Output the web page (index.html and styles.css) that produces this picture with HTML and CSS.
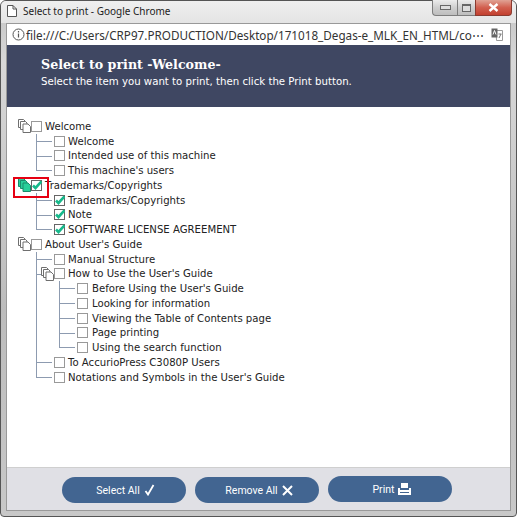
FILE: index.html
```html
<!DOCTYPE html>
<html>
<head>
<meta charset="utf-8">
<title>Select to print</title>
<link rel="stylesheet" href="styles.css">
</head>
<body>

<svg class="defs" width="0" height="0">
    <symbol id="pages" viewBox="0 0 13 14">
        <path d="M.5.5h5l1.500 1.500v6.500h-6.500z"/>
        <path d="M2.500 2.500h5l1.500 1.500v6.500h-6.500z"/>
        <path d="M5 5h5l2.500 2.500v6h-7.500z"/>
    </symbol>
    <symbol id="tick" viewBox="0 0 11 11">
        <path d="M2 5.500l2.500 2.500 6-6.500" fill="none" stroke="#17b98b" stroke-width="2.600"/>
    </symbol>
</svg>

<div class="window">
    <div class="titlebar">
        <svg class="page-icon" width="10" height="12" viewBox="0 0 10 12"><path d="M.5.5h5.500l3.500 3.500v7.500h-9z" fill="#fff" stroke="#555"/><path d="M6 .5v3.500h3.500" fill="none" stroke="#555"/></svg>
        <span class="title-text">Select to print - Google Chrome</span>
        <div class="controls">
            <span class="ctl ctl-min"><i></i></span>
            <span class="ctl ctl-max"><i></i></span>
            <span class="ctl ctl-close">
                <svg width="11" height="9" viewBox="0 0 11 9"><path d="M1.500 1l8 7M9.500 1l-8 7" stroke="#fff" stroke-width="2.400"/></svg>
            </span>
        </div>
    </div>

    <div class="client">
        <div class="address">
            <svg width="13" height="13" viewBox="0 0 13 13"><circle cx="6.500" cy="6.500" r="5.500" fill="none" stroke="#555"/><path d="M6.500 5.500v4M6.500 3v1.500" stroke="#555" stroke-width="1.200"/></svg>
            <span class="url">file:///C:/Users/CRP97.PRODUCTION/Desktop/171018_Degas-e_MLK_EN_HTML/co⋯</span>
            <svg class="translate" width="12" height="13" viewBox="0 0 12 13"><path d="M5 2.500h6.500v10h-6z" fill="#fff" stroke="#999"/><path d="M.5.500h6v9h-6z" fill="#666"/><path d="M2 6.500l1.500-4 1.500 4" fill="none" stroke="#fff"/><path d="M7.500 6h3M8 10l2-4" stroke="#777"/></svg>
        </div>

        <div class="header">
            <h1>Select to print -Welcome-</h1>
            <p>Select the item you want to print, then click the Print button.</p>
        </div>

        <div class="content">
            <ul class="tree">
                <li>
                    <div class="row"><svg class="pages"><use href="#pages"/></svg><span class="box"></span><span class="name">Welcome</span></div>
                    <ul>
                        <li><div class="row"><span class="box"></span><span class="name">Welcome</span></div></li>
                        <li><div class="row"><span class="box"></span><span class="name">Intended use of this machine</span></div></li>
                        <li><div class="row"><span class="box"></span><span class="name">This machine's users</span></div></li>
                    </ul>
                </li>
                <li class="selected">
                    <div class="row"><svg class="pages"><use href="#pages"/></svg><span class="box"><svg><use href="#tick"/></svg></span><span class="name">Trademarks/Copyrights</span></div>
                    <span class="callout"></span>
                    <ul>
                        <li><div class="row"><span class="box"><svg><use href="#tick"/></svg></span><span class="name">Trademarks/Copyrights</span></div></li>
                        <li><div class="row"><span class="box"><svg><use href="#tick"/></svg></span><span class="name">Note</span></div></li>
                        <li><div class="row"><span class="box"><svg><use href="#tick"/></svg></span><span class="name">SOFTWARE LICENSE AGREEMENT</span></div></li>
                    </ul>
                </li>
                <li>
                    <div class="row"><svg class="pages"><use href="#pages"/></svg><span class="box"></span><span class="name">About User's Guide</span></div>
                    <ul>
                        <li><div class="row"><span class="box"></span><span class="name">Manual Structure</span></div></li>
                        <li class="group">
                            <div class="row"><svg class="pages"><use href="#pages"/></svg><span class="box"></span><span class="name">How to Use the User's Guide</span></div>
                            <ul>
                                <li><div class="row"><span class="box"></span><span class="name">Before Using the User's Guide</span></div></li>
                                <li><div class="row"><span class="box"></span><span class="name">Looking for information</span></div></li>
                                <li><div class="row"><span class="box"></span><span class="name">Viewing the Table of Contents page</span></div></li>
                                <li><div class="row"><span class="box"></span><span class="name">Page printing</span></div></li>
                                <li><div class="row"><span class="box"></span><span class="name">Using the search function</span></div></li>
                            </ul>
                        </li>
                        <li><div class="row"><span class="box"></span><span class="name">To AccurioPress C3080P Users</span></div></li>
                        <li><div class="row"><span class="box"></span><span class="name">Notations and Symbols in the User's Guide</span></div></li>
                    </ul>
                </li>
            </ul>
        </div>

        <div class="footer">
            <a class="btn">Select All
                <svg width="12" height="12" viewBox="0 0 12 12"><path d="M1.500 7l2.500 3.500L9.500 1" fill="none" stroke="#fff" stroke-width="1.800"/></svg>
            </a>
            <a class="btn">Remove All
                <svg width="11" height="11" viewBox="0 0 11 11"><path d="M1 1l9 9M10 1l-9 9" stroke="#fff" stroke-width="2"/></svg>
            </a>
            <a class="btn btn-print">Print
                <svg width="13" height="12" viewBox="0 0 13 12"><path d="M3 0h7v5H3z" fill="#fff"/><path d="M0 5h2v2h9V5h2v7H0z" fill="#fff"/><path d="M2 9.500h9" stroke="#426591"/></svg>
            </a>
        </div>
    </div>
</div>

</body>
</html>
```
FILE: styles.css
```css
html, body {margin:0; padding:0; background:#fff;}
ul {list-style:none; margin:0; padding:0;}
.defs {display:block;}

/* browser window */
.window {box-sizing:border-box; width:517px; height:517px; padding:0 5px 5px; display:flex; flex-direction:column; background:linear-gradient(#c4c4c4, #d8d8d8 12%, #bcbcbc 60%, #c8c8c8); border:1px solid #555; border-radius:6px 6px 4px 4px;}
.titlebar {height:22px; flex:none; box-sizing:border-box; display:flex; align-items:center; font:10px "Noto Sans", sans-serif; color:#222; position:relative; background:linear-gradient(#efefef, #e4e4e4); margin:0 -5px; padding:0 5px 2px; border-radius:5px 5px 0 0;}
.page-icon {margin:0 6px 0 1px;}
.controls {position:absolute; top:-1px; right:4px; display:flex; height:16px;}
.ctl {display:flex; align-items:center; justify-content:center; border:1px solid #7d7d7d; border-top:none; box-sizing:border-box; background:linear-gradient(#ececec, #cfcfcf 50%, #bdbdbd);}
.ctl-min {width:25px; border-radius:0 0 0 4px; border-right:none;}
.ctl-max {width:18px; border-right:none;}
.ctl-close {width:37px; border-radius:0 0 4px 0; border-color:#8a3b30; background:linear-gradient(#e0a294, #d2604f 50%, #c2402f);}
.ctl-min i {display:block; width:9px; height:3px; border:1px solid #666; background:#ddd;}
.ctl-max i {display:block; width:7px; height:5px; border:1px solid #666; border-top-width:2px; background:#ddd;}

.client {flex:1; display:flex; flex-direction:column; background:#fff; border:1px solid #999; min-height:0;}
.address {height:21px; flex:none; display:flex; align-items:center; gap:1px; padding:0 7px 0 5px; box-sizing:border-box; font:11.700px "Noto Sans", sans-serif; color:#333;}
.url {flex:1; white-space:nowrap; overflow:hidden;}

.header {height:62px; flex:none; box-sizing:border-box; padding:12px 34px 0; background:#3f4762; color:#fff;}
.header h1 {margin:0; font:bold 12.650px "DejaVu Serif", serif;}
.header p {margin:4px 0 0; font:10.200px "DejaVu Sans", sans-serif;}

/* tree */
.content {flex:1; padding:12px 11px 0; font:10.150px "DejaVu Sans", sans-serif; color:#222;}
.row {height:14.750px; display:flex; align-items:center; white-space:nowrap;}
.pages {width:13px; height:14px; flex:none; fill:#fff; stroke:#6f6f6f; stroke-width:1;}
.box {width:9px; height:9px; flex:none; display:block; border:1px solid #999; background:#fff; position:relative;}
.box svg {position:absolute; left:-1px; top:-1px; width:11px; height:11px;}
.name {margin-left:3px;}
.tree > li {position:relative;}
.tree li ul li {position:relative;}
.tree > li > ul {margin-left:18px;}
.tree > li > ul > li > ul {margin-left:23px;}
.tree li ul li > .row {padding-left:18px;}
.tree > li > ul > li.group > .row {padding-left:5px;}
.group li .name {margin-left:4px;}
/* connector lines */
.tree li ul li::before {content:""; position:absolute; left:0; top:0; bottom:0; border-left:1px solid #8d9bb0;}
.tree li ul li:last-child::before {bottom:auto; height:7px;}
.tree li ul li::after {content:""; position:absolute; left:0; top:7px; width:16px; border-top:1px solid #8d9bb0;}
.tree li ul li.group::after {width:5px;}
.selected .pages {fill:#28cf9a; stroke:#198c6c;}
.selected .box {border-color:#666;}
.callout {position:absolute; left:-5px; top:-1px; width:32px; height:17px; border:2px solid #e60012; z-index:1;}

/* buttons */
.footer {height:43px; flex:none; display:flex; gap:9px; padding:9px 0 0 55px; box-sizing:border-box; background:#e0e0e5; border-top:1px solid #cfcfcf;}
.btn {width:124px; height:26px; box-sizing:border-box; padding-left:4px; display:flex; align-items:center; justify-content:center; gap:4px; border-radius:13px; background:#426591; color:#fff; font:10.500px Roboto, sans-serif;}
.btn-print {margin-top:-1px;}
```
